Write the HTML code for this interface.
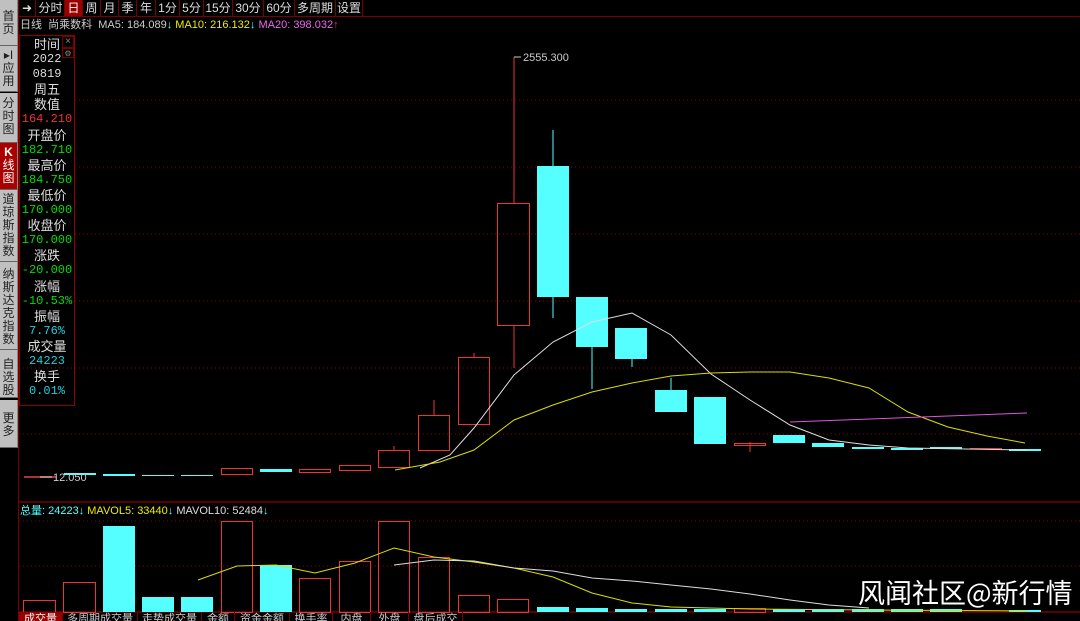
<!DOCTYPE html>
<html><head><meta charset="utf-8"><style>
*{margin:0;padding:0;box-sizing:border-box}
body{width:1080px;height:621px;background:#000;overflow:hidden;position:relative;font-family:"Liberation Sans","Noto Sans CJK SC",sans-serif}
.side{position:absolute;left:0;width:18px;background:#c0c0c0;color:#222;font-size:12px;line-height:13px;text-align:center;border-bottom:1px solid #666;border-right:1px solid #888}
.tb{position:absolute;top:0;height:16px;font-size:12px;line-height:16px;color:#ddd;background:#000;border-right:1px solid #700;text-align:center}
.info{position:absolute;left:19px;top:35px;width:56px;height:371px;border:1px solid #8b0000;text-align:center;font-size:13px;line-height:15.1px;color:#ddd;padding-top:1px}
.info .m{font-family:"Liberation Mono",monospace;font-size:12px}
.tabs{position:absolute;top:612px;height:9px;font-size:11px;color:#ccc;line-height:14px;border-right:1px solid #700;overflow:hidden;text-align:center}
</style></head><body>
<div class="side" style="top:0;height:46px;padding-top:10px">首<br>页</div>
<div class="side" style="top:46px;height:46px;padding-top:3px">▸I<br>应<br>用</div>
<div class="side" style="top:93px;height:50px;padding-top:4px">分<br>时<br>图</div>
<div class="side" style="top:143px;height:47px;padding-top:3px;background:#a00;color:#fff"><b>K</b><br>线<br>图</div>
<div class="side" style="top:190px;height:72px;padding-top:3px">道<br>琼<br>斯<br>指<br>数</div>
<div class="side" style="top:262px;height:88px;padding-top:6px">纳<br>斯<br>达<br>克<br>指<br>数</div>
<div class="side" style="top:350px;height:48px;padding-top:8px">自<br>选<br>股</div>
<div class="side" style="top:400px;height:48px;padding-top:12px">更<br>多</div>
<div style="position:absolute;left:18px;top:0;width:1px;height:621px;background:#700"></div>

<div class="tb" style="left:19px;width:17px">➜</div>
<div class="tb" style="left:37px;width:28px">分时</div>
<div class="tb" style="left:65px;width:18px;background:#900;color:#fff">日</div>
<div class="tb" style="left:83px;width:18px">周</div>
<div class="tb" style="left:101px;width:18px">月</div>
<div class="tb" style="left:119px;width:18px">季</div>
<div class="tb" style="left:137px;width:19px">年</div>
<div class="tb" style="left:156px;width:24px">1分</div>
<div class="tb" style="left:180px;width:24px">5分</div>
<div class="tb" style="left:204px;width:29px">15分</div>
<div class="tb" style="left:233px;width:31px">30分</div>
<div class="tb" style="left:264px;width:31px">60分</div>
<div class="tb" style="left:295px;width:41px">多周期</div>
<div class="tb" style="left:336px;width:27px">设置</div>
<div style="position:absolute;left:19px;top:16px;width:1061px;height:1px;background:#700"></div>
<div style="position:absolute;left:20px;top:18px;font-size:11px;line-height:14px;color:#ccc;white-space:nowrap">日线 &nbsp;尚乘数科 &nbsp;MA5: 184.089<span style="color:#5ff">↓</span> <span style="color:#ee0">MA10: 216.132</span><span style="color:#5ff">↓</span> <span style="color:#e6e">MA20: 398.032</span><span style="color:#f33">↑</span></div>

<svg style="position:absolute;left:0;top:0" width="1080" height="621">
<g stroke="#800" stroke-dasharray="1,3" stroke-width="1">
<line x1="75" y1="100" x2="1080" y2="100"/><line x1="75" y1="167" x2="1080" y2="167"/><line x1="75" y1="234" x2="1080" y2="234"/><line x1="75" y1="301" x2="1080" y2="301"/><line x1="19" y1="368" x2="1080" y2="368"/><line x1="19" y1="434" x2="1080" y2="434"/>
<line x1="19" y1="521" x2="1080" y2="521"/><line x1="19" y1="566" x2="1080" y2="566"/>
</g>
<line x1="19" y1="502" x2="1080" y2="502" stroke="#700" stroke-width="1.5"/>
<line x1="19" y1="612" x2="1080" y2="612" stroke="#700" stroke-width="1.5"/>
<g stroke-width="1">
<line x1="24" y1="477" x2="56" y2="477" stroke="#a33" stroke-width="2"/>
<rect x="64" y="473" width="32" height="2" fill="#5ff"/>
<rect x="103" y="474" width="32" height="2" fill="#5ff"/>
<rect x="142" y="475" width="32" height="1" fill="#5ff"/>
<rect x="181" y="475" width="32" height="1" fill="#5ff"/>
<rect x="221.5" y="468.5" width="31" height="6" fill="none" stroke="#e33"/>
<rect x="260" y="469" width="32" height="3" fill="#5ff"/>
<rect x="299.5" y="469.5" width="31" height="3" fill="none" stroke="#e33"/>
<rect x="339.5" y="465.5" width="31" height="5" fill="none" stroke="#e33"/>
<line x1="394" y1="446" x2="394" y2="450" stroke="#e33"/><rect x="378.5" y="450.5" width="31" height="17" fill="none" stroke="#e33"/>
<line x1="434" y1="400" x2="434" y2="415" stroke="#e33"/><rect x="418.5" y="415.5" width="31" height="35" fill="none" stroke="#e33"/>
<line x1="474" y1="353" x2="474" y2="357" stroke="#e33"/><rect x="458.5" y="357.5" width="31" height="67" fill="none" stroke="#e33"/>
<line x1="514" y1="57" x2="514" y2="203" stroke="#e33"/><line x1="514" y1="325" x2="514" y2="368" stroke="#e33"/><rect x="497.5" y="203.5" width="32" height="122" fill="none" stroke="#e33"/>
<line x1="553" y1="130" x2="553" y2="318" stroke="#5ff"/><rect x="537" y="166" width="32" height="131" fill="#5ff"/>
<line x1="592" y1="297" x2="592" y2="389" stroke="#5ff"/><rect x="576" y="297" width="32" height="50" fill="#5ff"/>
<line x1="632" y1="328" x2="632" y2="367" stroke="#5ff"/><rect x="615" y="328" width="32" height="31" fill="#5ff"/>
<line x1="671" y1="378" x2="671" y2="390" stroke="#5ff"/><rect x="655" y="390" width="32" height="22" fill="#5ff"/>
<rect x="694" y="397" width="32" height="47" fill="#5ff"/>
<line x1="750" y1="442" x2="750" y2="452" stroke="#e33"/><rect x="734.5" y="443.5" width="31" height="2" fill="none" stroke="#e33"/>
<rect x="773" y="435" width="32" height="8" fill="#5ff"/>
<rect x="812" y="443" width="32" height="4" fill="#5ff"/>
<rect x="852" y="447" width="32" height="2" fill="#5ff"/>
<rect x="891" y="448" width="32" height="2" fill="#5ff"/>
<rect x="930" y="447" width="32" height="2" fill="#5ff"/>
<rect x="970" y="448" width="32" height="1" fill="#e33"/>
<rect x="1009" y="449" width="32" height="2" fill="#5ff"/>
</g>
<polyline fill="none" stroke="#ddd" points="420,468 450,455 474,428 514,375 553,342 592,322 632,313 671,335 711,374 750,400 790,425 829,440 869,445 908,448 1027,450"/>
<polyline fill="none" stroke="#dd0" points="395,470 440,462 474,450 514,420 553,405 592,392 632,383 671,376 711,373 750,372 790,372 829,378 869,388 908,412 948,427 987,436 1025,443"/>
<polyline fill="none" stroke="#d5d" points="790,422 870,419 948,416 1027,413"/>
<line x1="514" y1="57" x2="521" y2="57" stroke="#ccc"/>
<text x="523" y="61" fill="#ccc" font-size="11" font-family="Liberation Sans">2555.300</text>
<line x1="40" y1="477" x2="52" y2="477" stroke="#ccc"/>
<text x="53" y="481" fill="#ccc" font-size="11" font-family="Liberation Sans">12.050</text>
<g stroke="#e33" fill="none">
<rect x="23.5" y="600.5" width="32" height="12"/><rect x="63.5" y="582.5" width="32" height="30"/>
<rect x="221.5" y="521.5" width="31" height="91"/><rect x="299.5" y="578.5" width="31" height="34"/>
<rect x="339.5" y="561.5" width="31" height="51"/><rect x="378.5" y="521.5" width="31" height="91"/>
<rect x="418.5" y="557.5" width="31" height="55"/><rect x="458.5" y="595.5" width="31" height="17"/>
<rect x="497.5" y="599.5" width="31" height="13"/><rect x="734.5" y="608.5" width="31" height="4"/>
</g>
<g fill="#5ff">
<rect x="103" y="526" width="32" height="86"/><rect x="142" y="597" width="32" height="15"/><rect x="181" y="597" width="32" height="15"/>
<rect x="260" y="565" width="32" height="47"/><rect x="537" y="607" width="32" height="5"/><rect x="576" y="608" width="32" height="4"/>
<rect x="615" y="609" width="32" height="3"/><rect x="655" y="609" width="32" height="3"/><rect x="694" y="609" width="32" height="3"/>
<rect x="773" y="609" width="32" height="3"/><rect x="812" y="609" width="32" height="3"/><rect x="852" y="609" width="32" height="3"/>
<rect x="891" y="609" width="32" height="3"/><rect x="930" y="609" width="32" height="3"/><rect x="1009" y="610" width="32" height="2"/>
</g>
<polyline fill="none" stroke="#dd0" points="198,580 237,566 276,565 315,573 355,563 394,548 434,557 474,562 514,568 553,577 592,593 632,603 671,607 750,609 870,610 1027,611"/>
<polyline fill="none" stroke="#ddd" points="394,565 434,560 474,561 514,568 553,571 592,578 632,581 671,585 711,589 750,594 790,600 829,605 869,608"/>
</svg>
<div style="position:absolute;left:20px;top:505px;font-size:11px;line-height:13px;white-space:nowrap;color:#5ff">总量: 24223↓ <span style="color:#ee0">MAVOL5: 33440</span>↓ <span style="color:#ddd">MAVOL10: 52484</span>↓</div>

<div class="info">
<div>时间</div><div class="m">2022</div><div class="m">0819</div><div>周五</div><div>数值</div>
<div class="m" style="color:#e33">164.210</div><div>开盘价</div><div class="m" style="color:#0d0">182.710</div>
<div>最高价</div><div class="m" style="color:#0d0">184.750</div><div>最低价</div><div class="m" style="color:#0d0">170.000</div>
<div>收盘价</div><div class="m" style="color:#0d0">170.000</div><div>涨跌</div><div class="m" style="color:#0d0">-20.000</div>
<div>涨幅</div><div class="m" style="color:#0d0">-10.53%</div><div>振幅</div><div class="m" style="color:#2cd">7.76%</div>
<div>成交量</div><div class="m" style="color:#2cd">24223</div><div>换手</div><div class="m" style="color:#2cd">0.01%</div>
</div>
<div style="position:absolute;left:62px;top:36px;width:12px;height:12px;border:1px solid #700;color:#888;font-size:10px;line-height:10px;text-align:center">×</div>
<div style="position:absolute;left:62px;top:48px;width:12px;height:10px;border:1px solid #700;color:#888;font-size:8px;line-height:9px;text-align:center">⚙</div>

<div class="tabs" style="left:19px;width:44px;background:#900;color:#fff">成交量</div>
<div class="tabs" style="left:63px;width:75px">多周期成交量</div>
<div class="tabs" style="left:138px;width:64px">走势成交量</div>
<div class="tabs" style="left:202px;width:33px">金额</div>
<div class="tabs" style="left:235px;width:55px">资金金额</div>
<div class="tabs" style="left:290px;width:43px">换手率</div>
<div class="tabs" style="left:333px;width:38px">内盘</div>
<div class="tabs" style="left:371px;width:38px">外盘</div>
<div class="tabs" style="left:409px;width:54px">盘后成交量</div>
<div style="position:absolute;left:858px;top:575px;font-size:27px;line-height:34px;color:#fff;font-family:'Noto Sans CJK SC',sans-serif;white-space:nowrap">风闻社区@新行情</div>
</body></html>
